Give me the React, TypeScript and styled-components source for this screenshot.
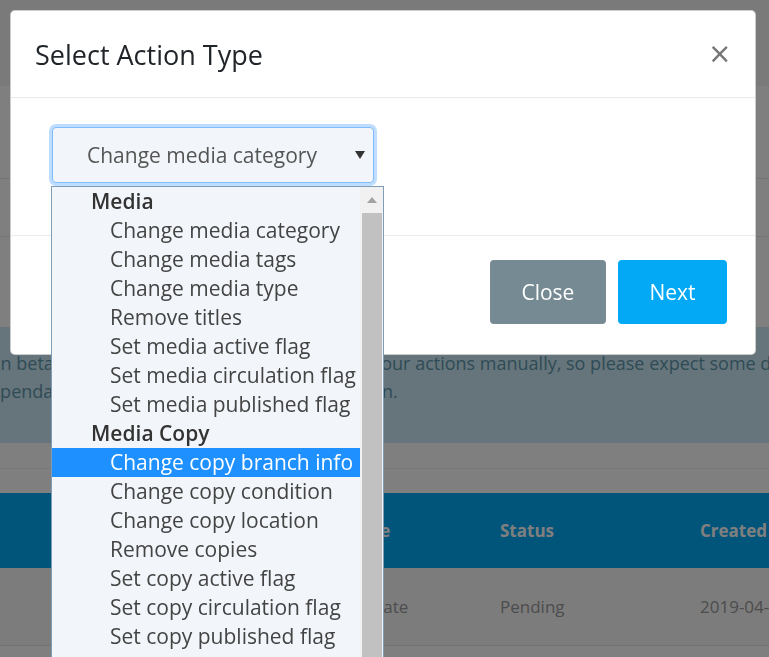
import styled, { createGlobalStyle } from "styled-components";

const GlobalStyle = createGlobalStyle`
  html, body {
    margin: 0;
    padding: 0;
    height: 100%;
    overflow: hidden;
  }
  body {
    font-family: "Open Sans", "Liberation Sans", sans-serif;
    background: #fff;
    color: #333;
  }
`;

const groups = [
  {
    label: "Media",
    items: [
      "Change media category",
      "Change media tags",
      "Change media type",
      "Remove titles",
      "Set media active flag",
      "Set media circulation flag",
      "Set media published flag",
    ],
  },
  {
    label: "Media Copy",
    items: [
      "Change copy branch info",
      "Change copy condition",
      "Change copy location",
      "Remove copies",
      "Set copy active flag",
      "Set copy circulation flag",
      "Set copy published flag",
    ],
  },
];

const selectedItem = "Change copy branch info";

/* page behind the modal */

const Page = styled.div`
  width: 100%;
  min-height: 100vh;
`;

const TopBar = styled.header`
  height: 86px;
  background: #f5f5f5;
`;

const Band = styled.div<{ $height: number }>`
  height: ${(p) => p.$height}px;
  border-bottom: 1px solid #e8e8e8;
`;

const Alert = styled.div`
  margin-top: 90px;
  padding: 22px 0 38px;
  background: #ccebf6;
  color: #5f97ad;
  font-size: 18px;
  line-height: 28px;
  overflow: hidden;
`;

const AlertLine = styled.div<{ $shift: number }>`
  white-space: nowrap;
  margin-left: ${(p) => p.$shift}px;
`;

const Toolbar = styled.div`
  height: 50px;
  display: flex;
  flex-direction: column;
  justify-content: center;
  &::after {
    content: "";
    display: block;
    border-top: 1px solid #eeeeee;
  }
`;

const TableRow = styled.div<{ $head?: boolean }>`
  display: grid;
  grid-template-columns: 140px 150px 150px 200px 200px;
  align-items: center;
  padding-left: 60px;
  height: ${(p) => (p.$head ? 75 : 77)}px;
  background: ${(p) => (p.$head ? "#03a9f4" : "#f8f8f8")};
  color: ${(p) => (p.$head ? "#ffffff" : "#9a9a9a")};
  font-weight: ${(p) => (p.$head ? 700 : 400)};
  font-size: 17px;
  border-bottom: ${(p) => (p.$head ? "none" : "1px solid #e6e6e6")};
  white-space: nowrap;
`;

/* modal */

const Backdrop = styled.div`
  position: fixed;
  inset: 0;
  background: rgba(0, 0, 0, 0.5);
`;

const Dialog = styled.div`
  box-sizing: border-box;
  width: 746px;
  margin: 10px 0 0 10px;
  background: #fff;
  border: 1px solid rgba(0, 0, 0, 0.2);
  border-radius: 5px;
`;

const Header = styled.div`
  height: 86px;
  display: flex;
  align-items: center;
  justify-content: space-between;
  padding: 0 25px 0 24px;
  border-bottom: 1px solid #e9ecef;
`;

const Title = styled.h5`
  margin: 0;
  font-size: 27px;
  font-weight: 400;
  color: #212529;
`;

const CloseX = styled.button`
  border: 0;
  padding: 0;
  background: none;
  font-family: inherit;
  font-size: 36px;
  font-weight: 400;
  line-height: 1;
  color: #777;
  cursor: pointer;
`;

const Body = styled.div`
  padding: 29px 41px 52px;
  border-bottom: 1px solid #e9ecef;
`;

const SelectWrap = styled.div`
  position: relative;
  width: 322px;
`;

const SelectBox = styled.div`
  box-sizing: border-box;
  height: 56px;
  display: flex;
  align-items: center;
  justify-content: space-between;
  padding: 0 8px 0 34px;
  background: #f2f5f9;
  border: 1px solid #80bdff;
  border-radius: 4px;
  box-shadow: 0 0 0 3px rgba(0, 123, 255, 0.25);
  font-size: 21px;
  color: #555;
`;

const Dropdown = styled.div`
  position: absolute;
  top: calc(100% + 3px);
  left: -1px;
  width: 333px;
  height: 520px;
  box-sizing: border-box;
  display: flex;
  background: #f2f5f9;
  border: 1px solid #7f9db9;
  overflow: hidden;
`;

const OptionList = styled.div`
  flex: 1;
  font-size: 21px;
  line-height: 29px;
`;

const GroupLabel = styled.div`
  padding-left: 39px;
  font-weight: 600;
  color: #333;
`;

const Option = styled.div<{ $selected?: boolean }>`
  padding-left: 58px;
  white-space: nowrap;
  color: ${(p) => (p.$selected ? "#fff" : "#444")};
  background: ${(p) => (p.$selected ? "#1e90ff" : "transparent")};
`;

const ScrollBar = styled.div`
  width: 23px;
  display: flex;
  flex-direction: column;
  background: #f1f1f1;
`;

const ScrollArrow = styled.div`
  height: 26px;
  display: flex;
  align-items: center;
  justify-content: center;
`;

const ScrollThumb = styled.div`
  flex: 1;
  margin: 0 1px 0 2px;
  background: #c1c1c1;
`;

const Footer = styled.div`
  display: flex;
  justify-content: flex-end;
  gap: 12px;
  padding: 24px 28px 30px;
`;

const Button = styled.button<{ $variant: "primary" | "secondary" }>`
  height: 64px;
  padding: 0 31.5px;
  border: 0;
  border-radius: 4px;
  font-family: inherit;
  font-size: 21px;
  color: #fff;
  background: ${(p) => (p.$variant === "primary" ? "#03a9f4" : "#758a92")};
  cursor: pointer;
`;

export default function App() {
  return (
    <>
      <GlobalStyle />
      <Page>
        <TopBar />
        <Band $height={92} />
        <Band $height={57} />
        <Alert>
          <AlertLine $shift={-4}>
            in beta. Our support team will be processing your actions
            manually, so please expect some delays,
          </AlertLine>
          <AlertLine $shift={-21}>
            dependant on volume it can run after submission.
          </AlertLine>
        </Alert>
        <Toolbar />
        <TableRow $head>
          <span>ID</span>
          <span>Name</span>
          <span>Type</span>
          <span>Status</span>
          <span>Created</span>
        </TableRow>
        <TableRow>
          <span>101</span>
          <span>Media</span>
          <span>Update</span>
          <span>Pending</span>
          <span>2019-04-12 10:31</span>
        </TableRow>
      </Page>

      <Backdrop>
        <Dialog>
          <Header>
            <Title>Select Action Type</Title>
            <CloseX aria-label="Close">×</CloseX>
          </Header>
          <Body>
            <SelectWrap>
              <SelectBox>
                <span>Change media category</span>
                <svg width="10" height="8" viewBox="0 0 10 8">
                  <path d="M0 0h10L5 8z" fill="#333" />
                </svg>
              </SelectBox>
              <Dropdown>
                <OptionList>
                  {groups.map((g) => (
                    <div key={g.label}>
                      <GroupLabel>{g.label}</GroupLabel>
                      {g.items.map((it) => (
                        <Option key={it} $selected={it === selectedItem}>
                          {it}
                        </Option>
                      ))}
                    </div>
                  ))}
                </OptionList>
                <ScrollBar>
                  <ScrollArrow>
                    <svg width="10" height="6" viewBox="0 0 10 6">
                      <path d="M0 6L5 0l5 6z" fill="#a3a3a3" />
                    </svg>
                  </ScrollArrow>
                  <ScrollThumb />
                </ScrollBar>
              </Dropdown>
            </SelectWrap>
          </Body>
          <Footer>
            <Button $variant="secondary">Close</Button>
            <Button $variant="primary">Next</Button>
          </Footer>
        </Dialog>
      </Backdrop>
    </>
  );
}
